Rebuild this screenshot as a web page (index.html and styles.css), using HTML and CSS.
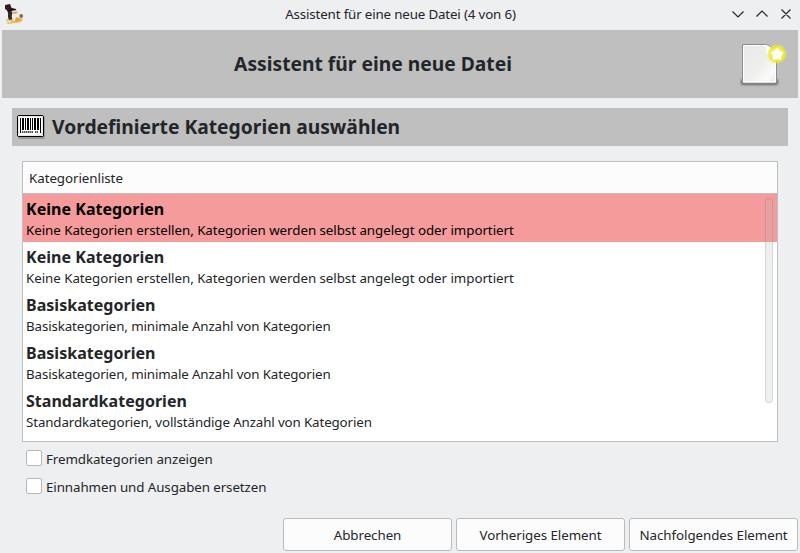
FILE: index.html
```html
<!DOCTYPE html>
<html lang="de">
<head>
<meta charset="utf-8">
<title>Assistent für eine neue Datei</title>
<link rel="stylesheet" href="styles.css">
</head>
<body>
<header class="titlebar">
  <svg class="app-icon" width="20" height="20" viewBox="0 0 20 20">
    <path d="M2 16l4-3 6 2 4-1 3 1-2 3-6 1-7 1-2-2z" fill="#eebd4c"/>
    <path d="M4 7l4-1 2 4-1 5-4 1-1-3z" fill="#302c33"/>
    <ellipse cx="10.800" cy="12.300" rx="3" ry="5" fill="#eeece7"/>
    <ellipse cx="10.500" cy="7.300" rx="2.800" ry="2" fill="#d8d6d4"/>
    <path d="M9 8h4l1 1-4 1z" fill="#e5a63a"/>
    <path d="M1 1l5-1 2 5-4 2-3-2z" fill="#3c1820"/>
    <path d="M3 6l5-2 4 1v1l-5 1-3 2z" fill="#211419"/>
    <circle cx="17.200" cy="12" r="1.900" fill="#856b4b"/>
    <path d="M12 13l3 1 2 1-3 3-3-1z" fill="#dda449"/>
    <ellipse cx="4.500" cy="17.500" rx="2.700" ry="1.300" fill="#dce5c9"/>
  </svg>
  <div class="window-title">Assistent für eine neue Datei (4 von 6)</div>
  <svg class="window-controls" width="60" height="12" viewBox="0 0 60 12">
    <path d="M2.500 3.500L8 9l5.500-5.500M26.500 8.500L32 3l5.500 5.500M51.500 1.500l9 9M60.500 1.500l-9 9" fill="none" stroke="#232629" stroke-width="1.150"/>
  </svg>
</header>
<div class="banner">
  <h1>Assistent für eine neue Datei</h1>
  <svg class="new-file" width="48" height="48" viewBox="0 0 48 48">
    <defs>
      <linearGradient id="paper" x1="0" y1="0" x2="1" y2="1"><stop stop-color="#e9eae7"/><stop offset=".55" stop-color="#eeefed"/><stop offset=".8" stop-color="#fafafa"/><stop offset="1" stop-color="#e8e9e6"/></linearGradient>
      <radialGradient id="glow"><stop offset=".35" stop-color="#fffb9a"/><stop offset=".6" stop-color="#f2ee36"/><stop offset=".75" stop-color="#ece838" stop-opacity=".8"/><stop offset="1" stop-color="#ece838" stop-opacity="0"/></radialGradient>
      <filter id="soft" x="-20%" y="-50%" width="140%" height="200%"><feGaussianBlur stdDeviation="1.200"/></filter>
    </defs>
    <rect x="6" y="39" width="37" height="6" rx="2" fill="#444" opacity=".7" filter="url(#soft)"/>
    <path d="M7.500 4.500h22c5 0 12 5 12 12v26.500h-34z" fill="url(#paper)" stroke="#8c8d8a"/>
    <path d="M8.500 5.500h21c4 1 11 5 11 11v25.500h-32z" fill="none" stroke="#fff"/>
    <path d="M29 5c3 2 3 7 2 9 4-1 9 0 10 4v-3c-1-5-7-10-12-10z" fill="#fff"/>
    <circle cx="42" cy="14" r="10.500" fill="url(#glow)"/>
    <path d="M42 8.700l1.700 3.400 3.800.6-2.700 2.700.6 3.800-3.400-1.700-3.400 1.700.6-3.800-2.700-2.700 3.800-.6z" fill="#fff" stroke="#fff" stroke-width="1.500" stroke-linejoin="round"/>
  </svg>
</div>
<main>
  <div class="section">
    <svg width="30" height="26" viewBox="0 0 30 26">
      <rect x="2" y="2" width="27" height="23" rx="2" fill="#777" opacity=".55"/>
      <rect x="1.500" y="1.500" width="26" height="21" rx="1.500" fill="#fff" stroke="#000"/>
      <rect x="2.500" y="2.500" width="24" height="19" fill="none" stroke="#e7e7e7"/>
      <path d="M4 4h1v12H4zM6 4h2v12H6zM9 4h1v12H9zM11 4h2v12h-2zM14 4h1v12h-1zM16 4h1v12h-1zM18 4h2v12h-2zM21 4h2v12h-2zM24 4h1v15h-1zM4 16h1v3H4z"/>
      <path d="M6 18h11M19 18h3" stroke="#555" stroke-width="2" stroke-dasharray="1.500 .5"/>
    </svg>
    <h2>Vordefinierte Kategorien auswählen</h2>
  </div>
  <div class="list">
    <div class="list-head">Kategorienliste</div>
    <div class="rows">
      <div class="row selected"><b>Keine Kategorien</b><span>Keine Kategorien erstellen, Kategorien werden selbst angelegt oder importiert</span></div>
      <div class="row"><b>Keine Kategorien</b><span>Keine Kategorien erstellen, Kategorien werden selbst angelegt oder importiert</span></div>
      <div class="row"><b>Basiskategorien</b><span class="tight">Basiskategorien, minimale Anzahl von Kategorien</span></div>
      <div class="row"><b>Basiskategorien</b><span class="tight">Basiskategorien, minimale Anzahl von Kategorien</span></div>
      <div class="row"><b>Standardkategorien</b><span class="tight">Standardkategorien, vollständige Anzahl von Kategorien</span></div>
      <div class="scrollbar"></div>
    </div>
  </div>
  <div class="options">
    <label><input type="checkbox">Fremdkategorien anzeigen</label>
    <label><input type="checkbox">Einnahmen und Ausgaben ersetzen</label>
  </div>
</main>
<footer>
  <button>Abbrechen</button>
  <button>Vorheriges Element</button>
  <button>Nachfolgendes Element</button>
</footer>
</body>
</html>
```
FILE: styles.css
```css
* { box-sizing: border-box; }
body {
  margin: 0;
  height: 553px;
  overflow: hidden;
  display: flex;
  flex-direction: column;
  background: #eeeff1;
  color: #232629;
  font: 13.333px/18px "Noto Sans", sans-serif;
}
h1, h2 { margin: 0; font-size: 19.25px; line-height: 28px; font-weight: 700; }
svg { display: block; flex: none; }
.titlebar {
  height: 30px;
  display: grid;
  grid-template-columns: 64px 1fr 64px;
  align-items: center;
  padding: 0 9px 2px 4px;
}
.window-title { text-align: center; padding-left: 6px; letter-spacing: -.155px; }
.window-controls { justify-self: end; overflow: visible; margin-right: 1px; }
.banner {
  height: 68px;
  margin: 0 2px;
  padding-right: 15px;
  display: flex;
  align-items: center;
  background: #bfbfbf;
}
.banner h1 { flex: 1; text-align: center; padding-left: 9px; }
.new-file { overflow: visible; }
main { padding: 10px 12px 0; }
.section {
  height: 38px;
  padding: 0 4px;
  display: flex;
  align-items: center;
  gap: 6px;
  background: #bfbfbf;
}
.list {
  height: 281px;
  margin: 15px 10px 0;
  border: 1px solid #bcbebf;
  background: #fff;
}
.list-head {
  height: 32px;
  padding: 7px 6px;
  border-bottom: 1px solid #bcbebf;
  background: #fcfcfc;
  letter-spacing: -.05px;
}
.rows { position: relative; }
.row { height: 48px; padding: 4px 3px 0; display: flex; flex-direction: column; }
.row b { font-size: 16px; line-height: 22px; letter-spacing: .03px; }
.row span { line-height: 20px; letter-spacing: -.042px; }
.row .tight { letter-spacing: -.125px; }
.selected { background: #f69b9b; color: #000; }
.scrollbar {
  position: absolute;
  top: 4px;
  right: 4px;
  width: 8px;
  height: 205px;
  border: 1px solid rgba(35, 38, 41, .12);
  border-radius: 4px;
  background: rgba(180, 180, 180, .22);
}
.options { padding: 8px 14px; display: grid; gap: 10px; letter-spacing: -.08px; }
.options label { display: flex; height: 18px; align-items: center; gap: 4px; }
.options input {
  appearance: none;
  width: 16px;
  height: 16px;
  margin: 0 0 2px;
  border: 1px solid #b6b8ba;
  border-radius: 2px;
  background: #fff;
}
footer {
  margin-top: auto;
  padding: 0 2px 2px;
  display: flex;
  justify-content: flex-end;
  gap: 4px;
}
button {
  width: 169px;
  height: 33px;
  padding: 0;
  border: 1px solid #b9bbbd;
  border-radius: 3px;
  background: #fcfcfc;
  color: inherit;
  font: inherit;
  letter-spacing: -.05px;
}
```
